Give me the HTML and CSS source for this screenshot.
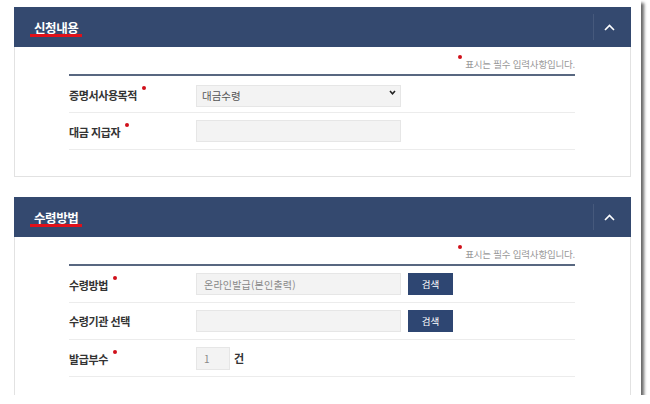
FILE: index.html
```html
<!DOCTYPE html>
<html lang="ko">
<head>
<meta charset="utf-8">
<title>신청내용</title>
<link rel="stylesheet" href="styles.css">
</head>
<body>
<div class="window">
  <section class="panel">
    <header class="panel-head">
      <h2 class="panel-title">신청내용</h2>
      <button class="toggle" type="button" aria-label="접기">
        <svg width="11" height="7" viewBox="0 0 11 7"><polyline points="1,6 5.5,1.5 10,6" fill="none" stroke="#fff" stroke-width="1.6"/></svg>
      </button>
    </header>
    <div class="panel-body">
      <p class="note"><span class="dot"></span>표시는 필수 입력사항입니다.</p>
      <div class="form">
        <div class="row">
          <div class="label">증명서사용목적<span class="dot req"></span></div>
          <div class="field">
            <div class="select-wrap">
              <select class="select"><option>대금수령</option></select>
              <svg class="chev" width="7" height="5" viewBox="0 0 7 5"><polyline points="1,1 3.5,3.7 6,1" fill="none" stroke="#222" stroke-width="1.6"/></svg>
            </div>
          </div>
        </div>
        <div class="row">
          <div class="label">대금 지급자<span class="dot req"></span></div>
          <div class="field"><input class="input" type="text"></div>
        </div>
      </div>
    </div>
  </section>

  <section class="panel">
    <header class="panel-head">
      <h2 class="panel-title">수령방법</h2>
      <button class="toggle" type="button" aria-label="접기">
        <svg width="11" height="7" viewBox="0 0 11 7"><polyline points="1,6 5.5,1.5 10,6" fill="none" stroke="#fff" stroke-width="1.6"/></svg>
      </button>
    </header>
    <div class="panel-body">
      <p class="note"><span class="dot"></span>표시는 필수 입력사항입니다.</p>
      <div class="form">
        <div class="row">
          <div class="label">수령방법<span class="dot req"></span></div>
          <div class="field">
            <input class="input ro" type="text" value="온라인발급(본인출력)" readonly>
            <button class="btn" type="button">검색</button>
          </div>
        </div>
        <div class="row">
          <div class="label">수령기관 선택</div>
          <div class="field">
            <input class="input" type="text">
            <button class="btn" type="button">검색</button>
          </div>
        </div>
        <div class="row">
          <div class="label">발급부수<span class="dot req"></span></div>
          <div class="field">
            <input class="input qty ro" type="text" value="1" readonly>
            <span class="unit">건</span>
          </div>
        </div>
      </div>
    </div>
  </section>
</div>
</body>
</html>
```

FILE: styles.css
```css
* { box-sizing: border-box; }
html, body { margin: 0; padding: 0; background: #fff; }
body {
  font-family: "Noto Sans CJK KR", "Noto Sans", sans-serif;
  color: #333;
}
.window {
  width: 641px;
  height: 395px;
  background: #fff;
  overflow: hidden;
  padding: 7px 10px 0 14px;
  box-shadow: 3px 3px 3px rgba(0, 0, 0, 0.6);
  display: flex;
  flex-direction: column;
  gap: 20px;
}
.panel { width: 617px; }
.panel-head {
  height: 40px;
  background: #34496f;
  display: flex;
  justify-content: space-between;
  padding-left: 16px;
}
.panel-title {
  margin: 14px 0 0;
  align-self: flex-start;
  font-size: 12.5px;
  line-height: 13px;
  font-weight: 700;
  color: #fff;
  padding: 0 4px;
  border-bottom: 3px solid #e0101a;
  letter-spacing: -0.4px;
}
.toggle {
  width: 38px;
  height: 26px;
  margin: 7px 0;
  padding: 0 6px 0 0;
  background: transparent;
  border: 0;
  border-left: 1px solid rgba(255, 255, 255, 0.09);
  display: flex;
  align-items: center;
  justify-content: center;
}
.panel-body {
  border: 1px solid #e2e2e2;
  border-top: 0;
  padding: 8px 55px 26px 54px;
}
.note {
  margin: 0 0 5px;
  height: 14px;
  text-align: right;
  font-size: 9.5px;
  line-height: 14px;
  color: #999;
  letter-spacing: -0.2px;
}
.dot {
  display: inline-block;
  width: 4px;
  height: 4px;
  border-radius: 50%;
  background: #d0101a;
  vertical-align: 9px;
  margin-right: 3px;
}
.dot.req { margin: 0 0 0 5px; vertical-align: 10px; }
.form { border-top: 2px solid #586780; }
.row {
  height: 37px;
  display: flex;
  align-items: center;
  border-bottom: 1px solid #ececec;
}
.label {
  width: 127px;
  height: 16px;
  line-height: 16px;
  font-size: 11px;
  font-weight: 700;
  color: #333;
  letter-spacing: -0.4px;
}
.field { display: flex; align-items: center; }
.select-wrap { position: relative; }
.select, .input {
  width: 205px;
  height: 22px;
  border: 1px solid #e6e6e6;
  background: #f3f3f3;
  font-family: inherit;
  font-size: 10.5px;
  color: #555;
  padding: 0 5px;
  margin: 0;
  border-radius: 0;
  outline: none;
}
.select { -webkit-appearance: none; appearance: none; }
.chev { position: absolute; right: 5px; top: 9px; pointer-events: none; }
.input.ro { color: #888; padding-left: 7px; font-size: 10px; letter-spacing: 0.2px; }
.input.qty { width: 34px; height: 23px; padding-left: 7px; }
.btn {
  width: 45px;
  height: 22px;
  margin-left: 7px;
  border: 0;
  background: #2e4672;
  color: #fff;
  font-family: inherit;
  font-size: 9.5px;
  padding: 0;
}
.unit {
  margin-left: 4px;
  font-size: 11px;
  font-weight: 700;
  color: #333;
}
```
